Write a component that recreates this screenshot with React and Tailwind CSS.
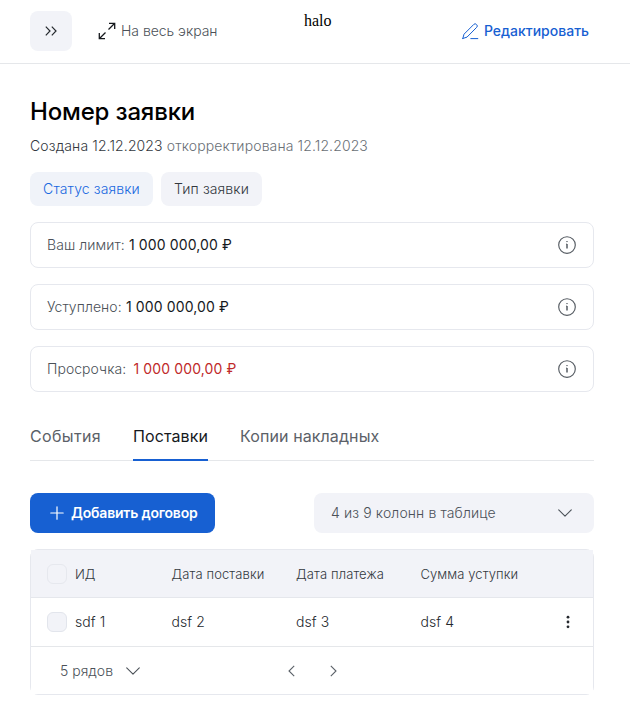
const Chevron = ({ className = "" }) => (
  <svg className={className} width="16" height="16" viewBox="0 0 16 16" fill="none" stroke="#4b5158" strokeWidth="1.1" strokeLinecap="round" strokeLinejoin="round">
    <path d="M1.7 4.8 8 11.1l6.3-6.3" />
  </svg>
);

const Info = () => (
  <svg width="18" height="18" viewBox="0 0 18 18" fill="none" stroke="#555b62" strokeWidth="1.15">
    <circle cx="9" cy="9" r="8.3" />
    <path d="M9 8v4.5" strokeWidth="1.5" />
    <path d="M8.2 8.1H9M8.3 5.6h1.4" strokeWidth="1" />
  </svg>
);

const limits = [
  { label: "Ваш лимит:", labelWidth: "w-[82px]", color: "text-[#16191d]" },
  { label: "Уступлено:", labelWidth: "w-[79px]", color: "text-[#16191d]" },
  { label: "Просрочка:", labelWidth: "w-[86.5px]", color: "text-[#c02a2a]" },
];

export default function App() {
  return (
    <div className="h-[712px] w-[630px] overflow-hidden bg-white font-[Inter,sans-serif] text-sm leading-5 text-[#33383e]">
      <header className="flex h-16 items-start border-b border-[#e5e7ea] pt-[11px] pr-[41px] pl-[30px]">
        <button className="flex h-10 w-[42px] items-center justify-center rounded-lg bg-[#f2f3f8]">
          <svg width="12" height="10" viewBox="0 0 12 10" fill="none" stroke="#24282d" strokeWidth="1.2">
            <path d="M.8.7 5 5 .8 9.3M6.8.7 11 5 6.8 9.3" />
          </svg>
        </button>
        <div className="ml-[26px] flex h-10 items-center">
          <svg width="18" height="18" viewBox="0 0 18 18" fill="none" stroke="#16191d" strokeWidth="1.3">
            <path d="M11 1.3h5.7V7M16.5 1.5l-6 6M1.3 11v5.7H7M1.5 16.5l6-6" />
          </svg>
          <span className="ml-[5px] font-light tracking-[-0.03px] text-[#4b5158]">На весь экран</span>
        </div>
        <span className="ml-[86.5px] font-['Liberation_Serif',serif] text-base leading-5 text-black">halo</span>
        <div className="ml-auto flex h-10 items-center text-[#1760d2]">
          <svg width="17" height="17" viewBox="0 0 17 17" fill="none" stroke="currentColor" strokeWidth="1" strokeLinejoin="round" strokeLinecap="round">
            <path d="M.8 15.5 2 11.2 11.8 1.4a1.8 1.8 0 0 1 2.6 0l.3.3a1.8 1.8 0 0 1 0 2.6L5 14.1.8 15.5ZM8.8 15.6h7" />
          </svg>
          <span className="ml-[5px] font-medium">Редактировать</span>
        </div>
      </header>

      <main className="pr-9 pl-[30px]">
        <h1 className="pt-8 text-2xl leading-8 font-medium tracking-[-0.17px] text-black">Номер заявки</h1>
        <p className="mt-2 font-light tracking-[0.12px] text-[#33383e]">
          Создана 12.12.2023 <span className="text-[#6a7076]">откорректирована 12.12.2023</span>
        </p>
        <div className="mt-4 flex gap-2 font-light tracking-[0.12px]">
          <span className="flex h-[34px] w-[123px] items-center justify-center rounded-lg bg-[#f0f3f9] text-[#1868e0]">Статус заявки</span>
          <span className="flex h-[34px] w-[101px] items-center justify-center rounded-lg bg-[#f2f3f8]">Тип заявки</span>
        </div>

        <section className="mt-4 flex flex-col gap-4">
          {limits.map((l) => (
            <div key={l.label} className="flex h-[46px] items-center rounded-lg border border-[#e6e8ee] px-4">
              <span className={`${l.labelWidth} shrink-0 font-light tracking-[0.05px] whitespace-nowrap text-[#4b5158]`}>{l.label}</span>
              <span className={`tracking-[0.12px] ${l.color}`}>1 000 000,00 ₽</span>
              <span className="ml-auto pr-[1px]"><Info /></span>
            </div>
          ))}
        </section>

        <nav className="mt-8 flex h-[37px] gap-8 border-b border-[#e5e7ea] text-base leading-6 whitespace-nowrap text-[#5b6168]">
          <span className="h-[37px] w-[71px] tracking-[0.36px]">События</span>
          <span className="h-[37px] w-[75px] border-b-2 border-[#1760d2] tracking-[0.1px] text-[#16191d]">Поставки</span>
          <span className="h-[37px] tracking-[0.1px]">Копии накладных</span>
        </nav>

        <div className="mt-8 flex justify-between">
          <button className="flex h-10 w-[185px] items-center rounded-lg bg-[#1760d2] pl-5 font-semibold text-white">
            <svg width="14" height="14" viewBox="0 0 14 14" stroke="currentColor" strokeWidth="1.2" strokeLinecap="round">
              <path d="M7 .8v12.4M.8 7h12.4" />
            </svg>
            <span className="ml-[7px] tracking-[-0.2px]">Добавить договор</span>
          </button>
          <div className="flex h-10 w-[280px] items-center justify-between rounded-lg bg-[#f2f3f8] pr-[21px] pl-[17px]">
            <span className="font-light tracking-[0.12px] text-[#4b5158]">4 из 9 колонн в таблице</span>
            <Chevron />
          </div>
        </div>

        <section className="mt-4 h-[146px] rounded-lg border border-[#e6e8ee] font-light">
          <div className="flex h-12 items-center border-b border-[#e5e7ec] bg-[#f2f3f8] pt-px pl-4 text-[13px] tracking-[0.12px] [&>span]:shrink-0">
            <i className="-mt-px h-5 w-5 rounded-md border border-[#e6e8ee]" />
            <span className="ml-2 w-[96.5px] tracking-normal">ИД</span>
            <span className="w-[124.5px]">Дата поставки</span>
            <span className="w-[124.5px]">Дата платежа</span>
            <span className="tracking-[0.08px]">Сумма уступки</span>
          </div>
          <div className="flex h-[49px] items-center border-b border-[#e5e7ea] pr-[22px] pl-4 tracking-[0.1px] text-[#24282d]">
            <i className="h-5 w-5 rounded-md border border-[#e2e5ec] bg-[#f2f3f8]" />
            <span className="ml-2 w-[96.5px]">sdf 1</span>
            <span className="w-[124.5px]">dsf 2</span>
            <span className="w-[124.5px]">dsf 3</span>
            <span>dsf 4</span>
            <svg className="ml-auto" width="6" height="14" viewBox="0 0 6 14" fill="#24282d">
              <circle cx="3" cy="2.2" r="1.4" /><circle cx="3" cy="7" r="1.4" /><circle cx="3" cy="11.8" r="1.4" />
            </svg>
          </div>
          <div className="flex h-[47px] items-center bg-white pl-[29px] text-[#4b5158]">
            <span className="w-[65px]">5 рядов</span>
            <Chevron />
            <svg className="ml-[147px]" width="7" height="12" viewBox="0 0 7 12" fill="none" stroke="#5b6168" strokeWidth="1.1"><path d="M6.2.8 1 6l5.2 5.2" /></svg>
            <svg className="ml-[35px]" width="7" height="12" viewBox="0 0 7 12" fill="none" stroke="#5b6168" strokeWidth="1.1"><path d="M.8.8 6 6 .8 11.2" /></svg>
          </div>
        </section>
      </main>
    </div>
  );
}
